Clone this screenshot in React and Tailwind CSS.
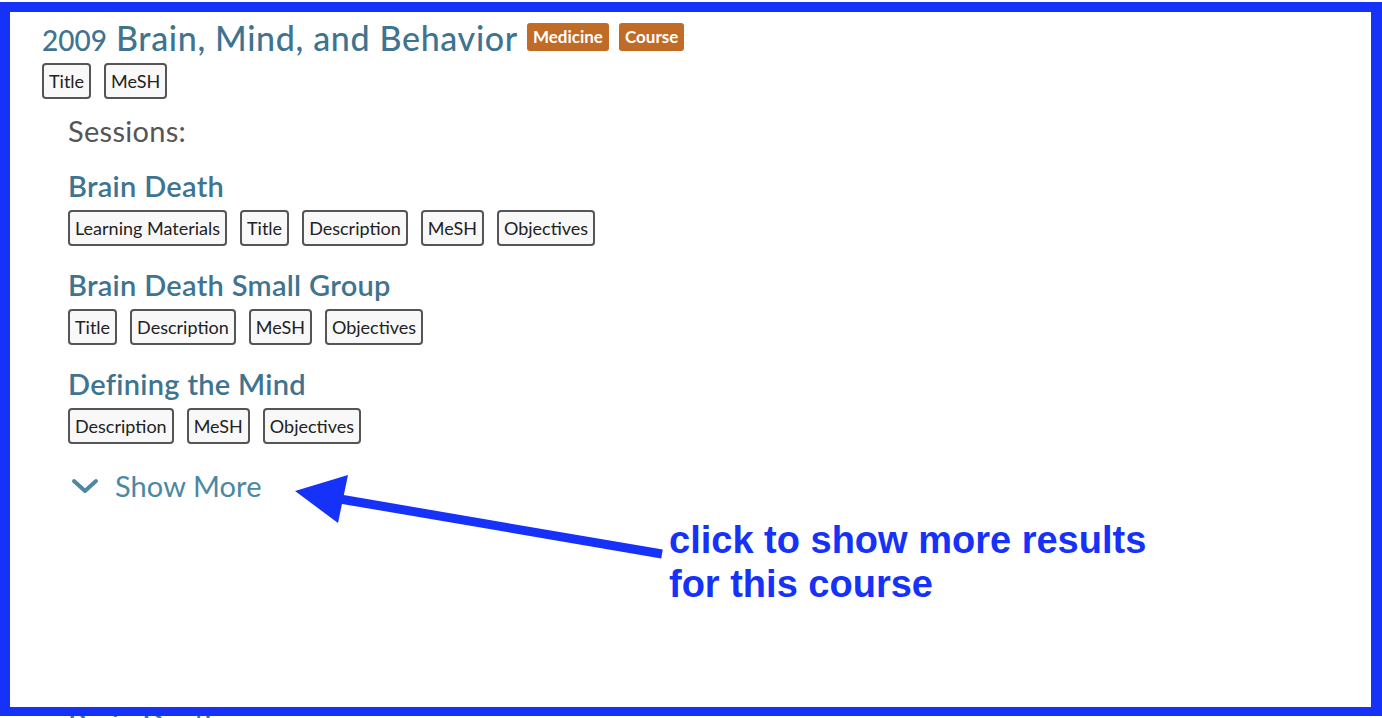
import React from 'react';

const sessions = [
  { name: 'Brain Death', tags: ['Learning Materials', 'Title', 'Description', 'MeSH', 'Objectives'] },
  { name: 'Brain Death Small Group', tags: ['Title', 'Description', 'MeSH', 'Objectives'] },
  { name: 'Defining the Mind', tags: ['Description', 'MeSH', 'Objectives'] },
];

function Tag({ children }) {
  return (
    <span className="flex h-[36px] items-center rounded-[4px] border-2 border-[#555] bg-[#f8f8f8] px-[5px] text-[18px] text-[#222]">
      {children}
    </span>
  );
}

function Badge({ children }) {
  return (
    <span className="flex h-[28px] items-center rounded-[3px] bg-[#c06c27] px-[6px] text-[17px] font-bold text-white">
      {children}
    </span>
  );
}

export default function App() {
  return (
    <div className="relative h-[718px] overflow-hidden bg-white font-['Lato',sans-serif]">
      <div className="pl-[42px] pt-[18px]">
        <div className="flex h-[38px] items-center">
          <h1 className="flex items-baseline text-[#3e7490]">
            <span className="text-[28px] font-medium">2009</span>
            <span className="ml-[9px] text-[34px] font-medium tracking-[0.65px]">Brain, Mind, and Behavior</span>
          </h1>
          <div className="ml-[9px] flex gap-[10px]">
            <Badge>Medicine</Badge>
            <Badge>Course</Badge>
          </div>
        </div>

        <div className="mt-[7px] flex gap-[13px]">
          <Tag>Title</Tag>
          <Tag>MeSH</Tag>
        </div>

        <div className="pl-[26px]">
          <p className="mt-[16px] text-[29px] leading-[32px] tracking-[0.3px] text-[#555]">Sessions:</p>

          {sessions.map((s) => (
            <div key={s.name}>
              <h2 className="mt-[22px] text-[29px] font-semibold leading-[34px] tracking-[0.3px] text-[#3e7490]">{s.name}</h2>
              <div className="mt-[7px] flex gap-[13px]">
                {s.tags.map((t) => (
                  <Tag key={t}>{t}</Tag>
                ))}
              </div>
            </div>
          ))}

          <button className="mt-[26px] flex items-center gap-[16px] text-[#4b88a2]">
            <svg width="28" height="18" viewBox="0 0 28 18" className="ml-[3px]">
              <path d="M3 4 L14 14 L25 4" fill="none" stroke="currentColor" strokeWidth="4" strokeLinecap="round" strokeLinejoin="round" />
            </svg>
            <span className="text-[29px] leading-[32px] tracking-[0.1px]">Show More</span>
          </button>

          <h2 className="mt-[204px] text-[29px] font-semibold leading-[34px] text-[#3e74a8]">Brain Death</h2>
        </div>
      </div>

      {/* annotation overlay */}
      <div className="pointer-events-none absolute left-0 right-0 top-[2px] bottom-[2px] border-b-[9px] border-l-[10px] border-r-[11px] border-t-[10px] border-[#1632f8]" />

      <svg className="pointer-events-none absolute left-0 top-0" width="1382" height="718">
        <line x1="340" y1="499" x2="662" y2="554" stroke="#1632f8" strokeWidth="9" />
        <polygon points="295,491 348,475 338,523" fill="#1632f8" />
      </svg>

      <div className="absolute left-[669px] top-[518px] font-['Liberation_Sans',Arial,sans-serif] text-[38px] font-bold leading-[44px] text-[#1632f8]">
        click to show more results
        <br />
        for this course
      </div>
    </div>
  );
}
